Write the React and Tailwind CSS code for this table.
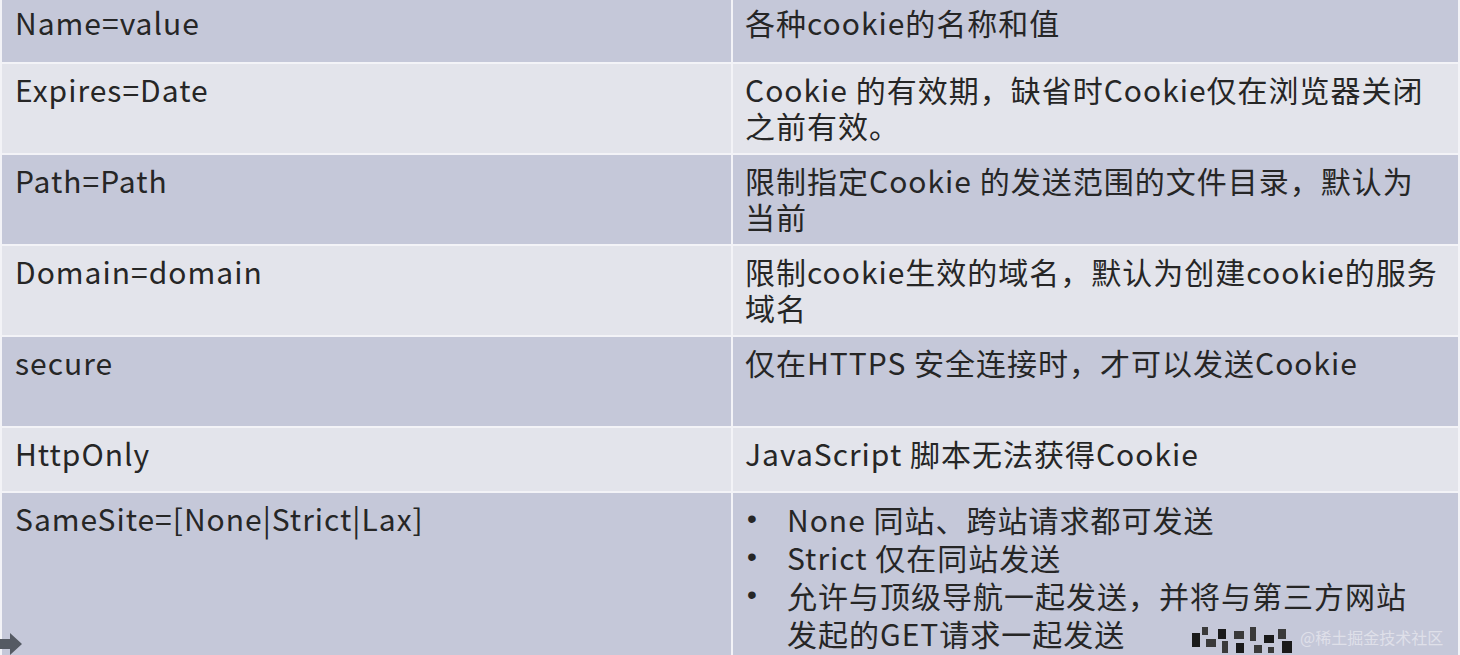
const rows = [
  { name: 'Name=value', desc: ['各种cookie的名称和值'], h: 'h-[62px]', tone: 'dark', pt: 'pt-[4px]' },
  { name: 'Expires=Date', desc: ['Cookie 的有效期，缺省时Cookie仅在浏览器关闭', '之前有效。'], h: 'h-[89px]', tone: 'light' },
  { name: 'Path=Path', desc: ['限制指定Cookie 的发送范围的文件目录，默认为', '当前'], h: 'h-[89px]', tone: 'dark' },
  { name: 'Domain=domain', desc: ['限制cookie生效的域名，默认为创建cookie的服务', '域名'], h: 'h-[89px]', tone: 'light' },
  { name: 'secure', desc: ['仅在HTTPS 安全连接时，才可以发送Cookie'], h: 'h-[89px]', tone: 'dark' },
  { name: 'HttpOnly', desc: ['JavaScript 脚本无法获得Cookie'], h: 'h-[63px]', tone: 'light' },
];

const sameSite = [
  ['None 同站、跨站请求都可发送'],
  ['Strict 仅在同站发送'],
  ['允许与顶级导航一起发送，并将与第三方网站', '发起的GET请求一起发送'],
];

function Cell({ children, tone, h, pt = 'pt-[7px]' }) {
  return (
    <div className={`${h} ${pt} leading-[36px] ${tone === 'dark' ? 'bg-[#c5c8d9]' : 'bg-[#e3e4eb]'}`}>
      {children}
    </div>
  );
}

function Mosaic() {
  // pixelated blot over the watermark
  const blocks = [
    [0, 10, 8, 14], [10, 4, 6, 8], [14, 16, 10, 8], [26, 6, 8, 10], [30, 18, 6, 12],
    [42, 8, 10, 8], [44, 20, 8, 10], [58, 4, 6, 14], [62, 22, 8, 8], [72, 12, 10, 8],
    [76, 24, 6, 6], [86, 6, 8, 10], [90, 18, 10, 12],
  ];
  return (
    <svg width="104" height="32" viewBox="0 0 104 32" className="absolute left-[1192px] top-[623px]">
      {blocks.map(([x, y, w, hh], i) => (
        <rect key={i} x={x} y={y} width={w} height={hh} fill={i % 3 === 0 ? '#1a1a1a' : '#3a3a3a'} />
      ))}
    </svg>
  );
}

export default function App() {
  return (
    <div
      className="relative h-[655px] w-[1460px] overflow-hidden bg-[#f3f3f7] px-[2px] text-[30px] tracking-[1px] text-[#262626]"
      style={{ fontFamily: '"Noto Sans CJK SC", "Noto Sans", sans-serif' }}
    >
      <div className="grid grid-cols-[729px_1fr] gap-[2px]">
        {rows.map((r) => (
          <div key={r.name} className="contents">
            <Cell tone={r.tone} h={r.h} pt={r.pt}>
              <div className="pl-[13px]">{r.name}</div>
            </Cell>
            <Cell tone={r.tone} h={r.h} pt={r.pt}>
              <div className="pl-[12px] whitespace-nowrap">
                {r.desc.map((line) => (
                  <div key={line}>{line}</div>
                ))}
              </div>
            </Cell>
          </div>
        ))}
        <Cell tone="dark" h="h-[175px]">
          <div className="pl-[13px]">SameSite=[None|Strict|Lax]</div>
        </Cell>
        <Cell tone="dark" h="h-[175px]">
          <ul className="leading-[38px] whitespace-nowrap">
            {sameSite.map((lines) => (
              <li key={lines[0]} className="flex">
                <span
                  className="w-[54px] shrink-0 pl-[14px] text-[28px]"
                  style={{ fontFamily: '"Liberation Sans", sans-serif' }}
                >
                  •
                </span>
                <div>
                  {lines.map((line) => (
                    <div key={line}>{line}</div>
                  ))}
                </div>
              </li>
            ))}
          </ul>
        </Cell>
      </div>

      <svg width="24" height="22" viewBox="0 0 24 22" className="absolute left-0 top-[633px]">
        <polygon points="0,6 10,6 10,0 22,11 10,22 10,16 0,16" fill="#555a63" />
      </svg>

      <Mosaic />
      <span className="absolute left-[1300px] top-[625px] text-[16px] tracking-normal text-[#e6e6ee] opacity-80">
        @稀土掘金技术社区
      </span>
    </div>
  );
}
